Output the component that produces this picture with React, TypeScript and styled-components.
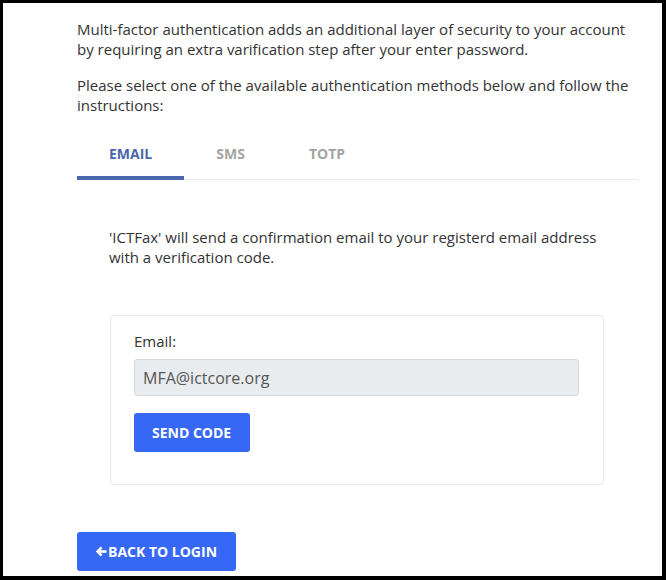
import React, { useState } from "react";
import styled, { createGlobalStyle } from "styled-components";

const GlobalStyle = createGlobalStyle`
  html, body { margin: 0; padding: 0; background: #000; }
  body { font-family: "Open Sans", "Noto Sans", sans-serif; }
  * { box-sizing: border-box; }
`;

const Frame = styled.div`
  margin: 3px 4px 0 3px;
  height: 573px;
  background: #fff;
  overflow: hidden;
  padding: 16px 24px 0 74px;
  color: #333;
`;

const Para = styled.p`
  margin: 0 0 16px;
  font-size: 15px;
  line-height: 20px;
  color: #333;
`;

const TabBar = styled.div`
  display: flex;
  margin-top: 17px;
  border-bottom: 1px solid #ececec;
`;

const Tab = styled.button<{ $active?: boolean }>`
  font-family: inherit;
  background: none;
  border: none;
  padding: 12px 32px 12px;
  margin-bottom: -1px;
  font-size: 14px;
  line-height: 20px;
  font-weight: 700;
  text-transform: uppercase;
  color: ${(p) => (p.$active ? "#4a67ac" : "#a3a3a3")};
  border-bottom: 4px solid ${(p) => (p.$active ? "#4a67ac" : "transparent")};
  cursor: pointer;
`;

const Pane = styled.div`
  padding: 47px 32px 0;
`;

const Info = styled.p`
  margin: 0 0 48px;
  font-size: 15px;
  line-height: 20px;
  color: #333;
`;

const Card = styled.div`
  border: 1px solid #e8e8e8;
  border-radius: 4px;
  padding: 15px 24px 32px 23px;
  margin: 0 2px 0 1px;
`;

const Label = styled.label`
  display: block;
  font-size: 15px;
  line-height: 20px;
  color: #333;
  margin-bottom: 8px;
`;

const Input = styled.input`
  display: block;
  width: 100%;
  height: 37px;
  padding: 6px 8px;
  font-family: inherit;
  font-size: 16px;
  color: #555;
  background: #e9ecef;
  border: 1px solid #d6d9dc;
  border-radius: 3px;
  outline: none;
`;

const Button = styled.button`
  display: inline-flex;
  align-items: center;
  gap: 1px;
  height: 39px;
  padding: 0 18px;
  font-family: inherit;
  font-size: 14px;
  font-weight: 700;
  text-transform: uppercase;
  color: #fff;
  background: #3767f5;
  border: none;
  border-radius: 3px;
  cursor: pointer;
`;

const SendButton = styled(Button)`
  margin-top: 17px;
  padding: 0 19px 0 18px;
`;

const BackButton = styled(Button)`
  margin-top: 47px;
  padding: 0 19px 0 19px;
`;

const ArrowLeft = () => (
  <svg width="11" height="11" viewBox="0 0 11 11" fill="none">
    <path d="M10.5 5.5H2" stroke="#fff" strokeWidth="2.6" />
    <path d="M5.6 1.4L1.6 5.5L5.6 9.6" stroke="#fff" strokeWidth="2.6" strokeLinejoin="miter" />
  </svg>
);

export default function App() {
  const [tab, setTab] = useState("email");
  return (
    <>
      <GlobalStyle />
      <Frame>
        <Para>
          Multi-factor authentication adds an additional layer of security to your account by
          requiring an extra varification step after your enter password.
        </Para>
        <Para>
          Please select one of the available authentication methods below and follow the
          instructions:
        </Para>
        <TabBar>
          <Tab $active={tab === "email"} onClick={() => setTab("email")}>Email</Tab>
          <Tab $active={tab === "sms"} onClick={() => setTab("sms")}>SMS</Tab>
          <Tab $active={tab === "totp"} onClick={() => setTab("totp")}>TOTP</Tab>
        </TabBar>
        <Pane>
          <Info>
            'ICTFax' will send a confirmation email to your registerd email address with a
            verification code.
          </Info>
          <Card>
            <Label>Email:</Label>
            <Input readOnly value="MFA@ictcore.org" />
            <SendButton>Send Code</SendButton>
          </Card>
        </Pane>
        <BackButton>
          <ArrowLeft />
          Back to Login
        </BackButton>
      </Frame>
    </>
  );
}
